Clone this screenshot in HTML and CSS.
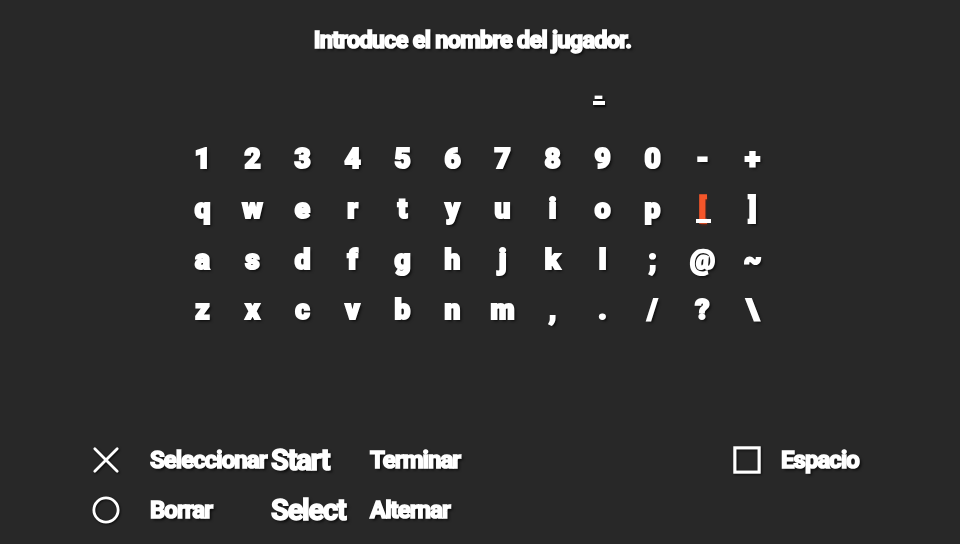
FILE: index.html
```html
<!DOCTYPE html>
<html lang="es">
<head>
<meta charset="utf-8">
<title>Introduce el nombre del jugador</title>
<link rel="stylesheet" href="styles.css">
</head>
<body>
<main class="screen">
  <h1 class="title">Introduce el nombre del jugador.</h1>
  <div class="entry"><span class="entry-cursor">-</span></div>
  <div class="keys">
    <span>1</span><span>2</span><span>3</span><span>4</span><span>5</span><span>6</span><span>7</span><span>8</span><span>9</span><span>0</span><span>-</span><span>+</span>
    <span>q</span><span>w</span><span>e</span><span>r</span><span>t</span><span>y</span><span>u</span><span>i</span><span>o</span><span>p</span><span class="active">[</span><span>]</span>
    <span>a</span><span>s</span><span>d</span><span>f</span><span>g</span><span>h</span><span>j</span><span>k</span><span>l</span><span>;</span><span>@</span><span>~</span>
    <span>z</span><span>x</span><span>c</span><span>v</span><span>b</span><span>n</span><span>m</span><span>,</span><span>.</span><span>/</span><span>?</span><span>\</span>
  </div>
  <div class="legend">
    <svg class="icon" viewBox="0 0 30 30"><path d="M3 3 L27 27 M27 3 L3 27"/></svg>
    <span class="label">Seleccionar</span>
    <span class="label big">Start</span>
    <span class="label">Terminar</span>
    <svg class="icon square" viewBox="0 0 30 30"><rect x="2" y="2" width="26" height="26"/></svg>
    <span class="label">Espacio</span>
    <svg class="icon" viewBox="0 0 30 30"><circle cx="15" cy="15" r="13"/></svg>
    <span class="label">Borrar</span>
    <span class="label big">Select</span>
    <span class="label">Alternar</span>
  </div>
</main>
</body>
</html>
```
FILE: styles.css
```css
* { box-sizing: border-box; }
html, body { margin: 0; padding: 0; }
body {
  width: 960px;
  height: 544px;
  overflow: hidden;
  background: #282828;
  font-family: Roboto, "Liberation Sans", sans-serif;
  color: #fff;
}
.screen {
  display: flex;
  flex-direction: column;
  align-items: center;
  height: 544px;
  padding-top: 24px;
  filter: blur(0.6px);
}
.title {
  margin: 0 15px 0 0;
  height: 32px;
  font-size: 23.5px;
  line-height: 32px;
  font-weight: 700;
  letter-spacing: -0.75px;
  -webkit-text-stroke: 1.6px #fff;
  text-shadow: 2px 2px 3px rgba(0,0,0,.8);
}
.entry {
  width: 600px;
  height: 50px;
  margin-top: 18px;
  padding-left: 409px;
  margin-right: 5px;
}
.entry-cursor {
  display: inline-block;
  position: relative;
  width: 24px;
  font-size: 26px;
  line-height: 44px;
  font-weight: 900;
  text-align: center;
  text-shadow: 2px 2px 3px rgba(0,0,0,.8);
}
.entry-cursor::after {
  content: "";
  position: absolute;
  left: 6px;
  right: 6px;
  top: 27px;
  height: 4px;
  background: #fff;
  box-shadow: 1px 2px 2px rgba(0,0,0,.8);
}
.keys {
  display: grid;
  grid-template-columns: repeat(12, 50px);
  grid-auto-rows: 50.3px;
  width: 600px;
  margin-top: 10px;
  margin-right: 5px;
  font-size: 28px;
  line-height: 50px;
  font-weight: 900;
  text-align: center;
  -webkit-text-stroke: 2px #fff;
  text-shadow: 2px 2px 3px rgba(0,0,0,.8);
}
.keys .active {
  position: relative;
  color: #f4562a;
  -webkit-text-stroke: 1.6px #f4562a;
  text-shadow: 1px 2px 2px rgba(120,40,20,.8);
}
.keys .active::after {
  content: "";
  position: absolute;
  left: 18px;
  width: 15px;
  top: 35px;
  height: 4px;
  background: #fff;
}
.legend {
  display: grid;
  grid-template-columns: 58px 121px 99px 363px 48px auto;
  grid-auto-rows: 50px;
  align-items: center;
  align-self: flex-start;
  margin-top: 100px;
  margin-left: 92px;
  font-size: 24px;
  font-weight: 700;
  letter-spacing: -0.95px;
}
.icon {
  width: 28px;
  height: 28px;
  fill: none;
  stroke: #fff;
  stroke-width: 3;
  stroke-linecap: round;
  overflow: visible;
  filter: drop-shadow(1px 1px 1px rgba(0,0,0,.7));
}
.square { stroke-width: 3.4; }
.label {
  white-space: nowrap;
  -webkit-text-stroke: 1.5px #fff;
  text-shadow: 2px 2px 3px rgba(0,0,0,.8);
}
.big {
  font-size: 29px;
  letter-spacing: -1.2px;
}
```
